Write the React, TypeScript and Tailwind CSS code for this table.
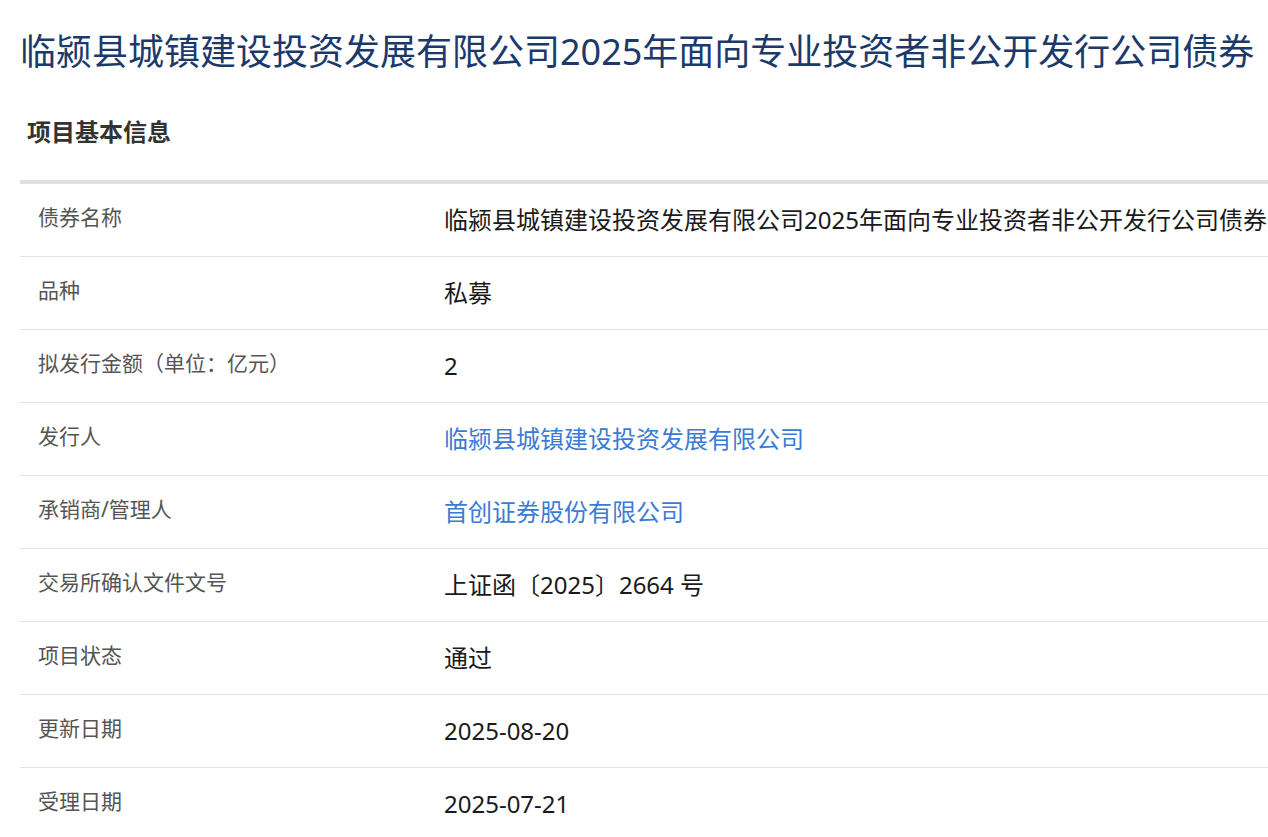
import React from 'react';

const rows: { label: string; value: string; link?: boolean }[] = [
  { label: '债券名称', value: '临颍县城镇建设投资发展有限公司2025年面向专业投资者非公开发行公司债券' },
  { label: '品种', value: '私募' },
  { label: '拟发行金额（单位：亿元）', value: '2' },
  { label: '发行人', value: '临颍县城镇建设投资发展有限公司', link: true },
  { label: '承销商/管理人', value: '首创证券股份有限公司', link: true },
  { label: '交易所确认文件文号', value: '上证函〔2025〕2664 号' },
  { label: '项目状态', value: '通过' },
  { label: '更新日期', value: '2025-08-20' },
  { label: '受理日期', value: '2025-07-21' },
];

export default function App() {
  return (
    <div
      className="min-h-screen bg-white overflow-hidden"
      style={{ fontFamily: '"Noto Sans", "Noto Sans CJK SC", sans-serif' }}
    >
      <div className="pl-5">
        {/* Title */}
        <h1 className="pt-[28px] text-[36px] leading-[48px] font-normal text-[#1b3a6b] whitespace-nowrap">
          临颍县城镇建设投资发展有限公司2025年面向专业投资者非公开发行公司债券
        </h1>

        {/* Section header */}
        <h2 className="mt-[41px] pl-[7px] text-[24px] leading-[30px] font-bold text-[#333]">项目基本信息</h2>

        <div className="mt-[33px] h-[4px] bg-[#dcdfe4]" />

        {/* Info table */}
        <div>
          {rows.map((r) => (
            <div key={r.label} className="flex h-[73px] border-b border-[#e3e3e3]">
              <div className="w-[424px] shrink-0 pl-[18px] pt-[19px] text-[21px] leading-[28px] text-[#555]">
                {r.label}
              </div>
              <div
                className={
                  'pt-[20px] text-[24px] leading-[32px] whitespace-nowrap ' +
                  (r.link ? 'text-[#3a7bd5]' : 'text-[#1a1a1a]')
                }
              >
                {r.value}
              </div>
            </div>
          ))}
        </div>
      </div>
    </div>
  );
}
